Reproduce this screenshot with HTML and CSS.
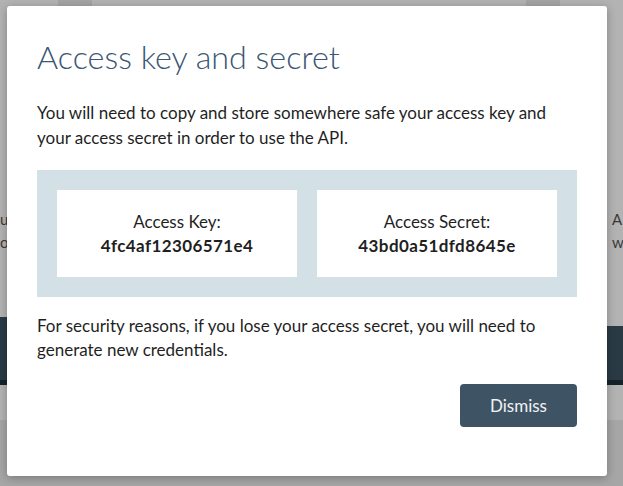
FILE: index.html
```html
<!DOCTYPE html>
<html lang="en">
<head>
<meta charset="utf-8">
<title>Access key and secret</title>
<link rel="stylesheet" href="styles.css">
</head>
<body>
<div class="page">
  <div class="topstrip">
    <span class="band band-a"></span>
    <span class="band band-b"></span>
  </div>
  <div class="cards">
    <div class="col col-left">
      <p class="blurb"><span class="ln">u</span><span class="ln">o</span></p>
      <div class="bar bar-left"></div>
    </div>
    <div class="col col-right">
      <p class="blurb"><span class="ln">A</span><span class="ln">w</span></p>
      <div class="bar bar-right"></div>
    </div>
  </div>
</div>

<div class="modal" role="dialog" aria-labelledby="modal-title">
  <h1 class="modal-title" id="modal-title">Access key and secret</h1>
  <p class="modal-text">You will need to copy and store somewhere safe your access key and your access secret in order to use the API.</p>
  <div class="cred-panel">
    <div class="cred-box">
      <div class="cred-label">Access Key:</div>
      <div class="cred-value">4fc4af12306571e4</div>
    </div>
    <div class="cred-box">
      <div class="cred-label">Access Secret:</div>
      <div class="cred-value">43bd0a51dfd8645e</div>
    </div>
  </div>
  <p class="modal-text modal-note">For security reasons, if you lose your access secret, you will need to generate new credentials.</p>
  <div class="modal-actions">
    <button class="btn-dismiss" type="button">Dismiss</button>
  </div>
</div>
</body>
</html>
```

FILE: styles.css
```css
html, body {
  margin: 0;
  padding: 0;
}

body {
  width: 623px;
  height: 486px;
  overflow: hidden;
  background: #a6a6a6;
  font-family: Lato, "Liberation Sans", sans-serif;
  color: #1f1f1f;
  position: relative;
}

.page {
  height: 420px;
  background: #b3b3b3;
}

.topstrip {
  height: 6px;
  display: flex;
}

.band {
  display: block;
  height: 6px;
  background: #a5a5a5;
  width: 34px;
}

.band-a {
  margin-left: 58px;
}

.band-b {
  margin-left: 434px;
}

.cards {
  display: flex;
  justify-content: space-between;
  height: 414px;
}

.col {
  display: flex;
  flex-direction: column;
}

.col-left {
  width: 7px;
}

.col-right {
  width: 16px;
}

.blurb {
  margin: 202px 0 0;
  font-size: 15px;
  line-height: 23px;
  color: #3a3a3a;
  display: flex;
  flex-direction: column;
}

.col-right .blurb {
  padding-left: 5px;
}

.bar {
  background: #2a3a45;
  border-bottom: 5px solid #16222a;
}

.bar-left {
  width: 7px;
  height: 63px;
  margin-top: 63px;
}

.bar-right {
  width: 16px;
  height: 54px;
  margin-top: 72px;
}

.modal {
  position: absolute;
  left: 7px;
  top: 6px;
  width: 600px;
  height: 470px;
  box-sizing: border-box;
  padding: 31px 30px 0;
  background: #ffffff;
  border-radius: 3px;
  box-shadow: 0 2px 10px rgba(0, 0, 0, 0.28);
}

.modal-title {
  margin: 0;
  font-size: 32.3px;
  line-height: 40px;
  font-weight: 300;
  color: #3b5572;
}

.modal-text {
  margin: 24px 0 0;
  font-size: 17px;
  line-height: 24.5px;
  color: #1f1f1f;
}

.cred-panel {
  margin-top: 20px;
  padding: 20px;
  background: #d3e0e5;
  display: grid;
  grid-template-columns: 1fr 1fr;
  gap: 20px;
}

.cred-box {
  background: #ffffff;
  height: 87px;
  display: flex;
  flex-direction: column;
  justify-content: center;
  align-items: center;
  font-size: 17px;
  line-height: 24px;
}

.cred-value {
  font-weight: 700;
  letter-spacing: 0.4px;
}

.modal-note {
  margin-top: 17px;
  line-height: 24px;
}

.modal-actions {
  display: flex;
  justify-content: flex-end;
  margin-top: 22px;
}

.btn-dismiss {
  width: 117px;
  height: 43px;
  border: 0;
  border-radius: 4px;
  background: #3e5465;
  color: #f2f2f2;
  font-family: Lato, "Liberation Sans", sans-serif;
  font-size: 17px;
  cursor: pointer;
}
```
